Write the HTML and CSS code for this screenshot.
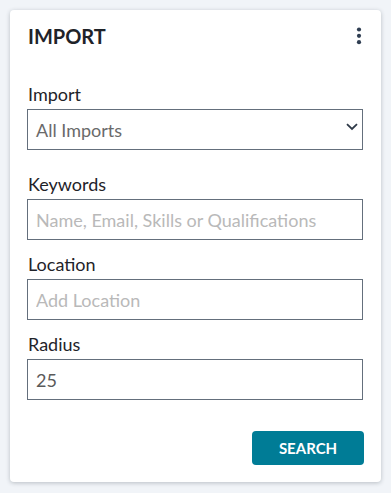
FILE: index.html
```html
<!DOCTYPE html>
<html lang="en">
  <head>
    <meta charset="UTF-8" />
    <title>Import</title>
    <link rel="stylesheet" href="styles.css">
  </head>
  <body>
    <div class="card">
      <header>
        <div class="titulo">IMPORT</div>
        <div class="menu">
          <svg width="6" height="18" viewBox="0 0 6 18">
            <circle cx="3" cy="2.5" r="2.1" fill="#2f3e52" />
            <circle cx="3" cy="8.8" r="2.1" fill="#2f3e52" />
            <circle cx="3" cy="15.2" r="2.1" fill="#2f3e52" />
          </svg>
        </div>
      </header>

      <div class="campo campo-select">
        <label>Import</label>
        <div class="select">
          <span>All Imports</span>
          <svg width="12" height="8" viewBox="0 0 12 8">
            <path d="M1 1.2 L6 6 L11 1.2" fill="none" stroke="#2f3a48" stroke-width="1.8" />
          </svg>
        </div>
      </div>

      <div class="campo">
        <label>Keywords</label>
        <input class="entrada" placeholder="Name, Email, Skills or Qualifications" />
      </div>

      <div class="campo">
        <label>Location</label>
        <input class="entrada" placeholder="Add Location" />
      </div>

      <div class="campo">
        <label>Radius</label>
        <input class="entrada" value="25" />
      </div>

      <div class="acoes">
        <div class="btn-search">SEARCH</div>
      </div>
    </div>
  </body>
</html>
```

FILE: styles.css
```css
body {
  margin: 0;
  padding: 10px;
  background: #f1f4f8;
  font-family: Lato, "Open Sans", sans-serif;
  color: #1f2329;
}
.card {
  width: 371px;
  height: 472px;
  box-sizing: border-box;
  background: #fff;
  border-radius: 4px;
  box-shadow: 0 1px 4px rgba(40, 50, 60, 0.28);
  padding: 15px 17px 16px 17px;
}
header {
  display: flex;
  justify-content: space-between;
  align-items: center;
  height: 22px;
  margin-bottom: 37px;
}
.titulo {
  font-size: 20px;
  font-weight: bold;
  line-height: 22px;
  padding-left: 1px;
  color: #1f2329;
}
.menu {
  display: flex;
  padding-right: 2px;
}
.campo {
  display: flex;
  flex-direction: column;
  margin-bottom: 14px;
}
.campo-select {
  margin-bottom: 24px;
}
label {
  font-size: 18px;
  line-height: 20px;
  margin-bottom: 5px;
  padding-left: 1px;
}
.select,
.entrada {
  box-sizing: border-box;
  width: 336px;
  height: 41px;
  border: 1px solid #646f7c;
  font-family: Lato, "Open Sans", sans-serif;
  font-size: 18px;
  padding: 0 8px;
  color: #5a5a5a;
  outline: none;
  margin: 0;
}
.select {
  display: flex;
  align-items: center;
  justify-content: space-between;
  color: #6a6a6a;
}
.select svg {
  margin-top: -5px;
  margin-right: -4px;
}
.entrada::placeholder {
  color: #b9b9b9;
}
.acoes {
  display: flex;
  justify-content: flex-end;
  margin-top: 31px;
}
.btn-search {
  width: 112px;
  height: 34px;
  background: #007c96;
  color: #fff;
  border-radius: 4px;
  font-size: 15px;
  font-weight: bold;
  display: flex;
  align-items: center;
  justify-content: center;
}
```
